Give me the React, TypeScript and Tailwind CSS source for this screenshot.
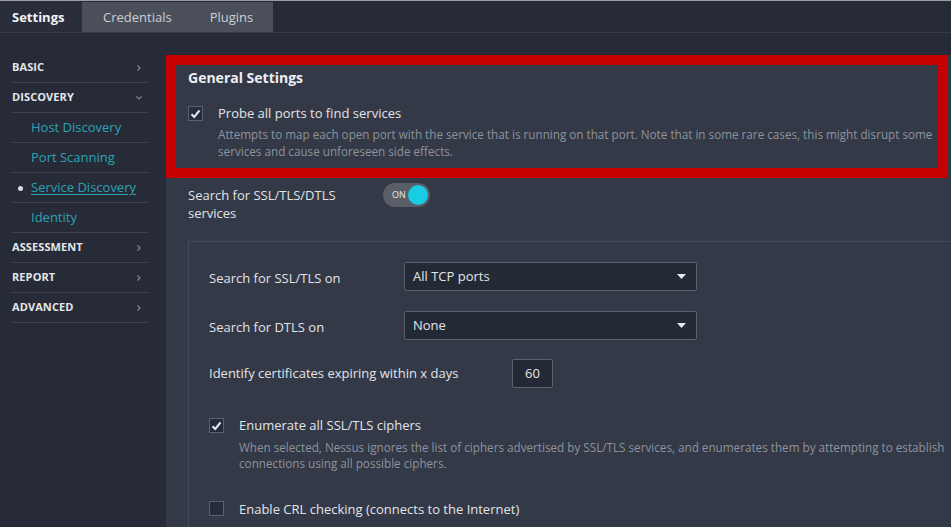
import React from "react";

const Chevron = ({ down = false }: { down?: boolean }) => (
  <svg width="8" height="8" viewBox="0 0 8 8" className="text-[#7d8390]">
    {down ? (
      <path d="M1.5 2.5 L4 5 L6.5 2.5" fill="none" stroke="currentColor" strokeWidth="1.2" />
    ) : (
      <path d="M2.5 1.5 L5 4 L2.5 6.5" fill="none" stroke="currentColor" strokeWidth="1.2" />
    )}
  </svg>
);

const Check = ({ checked }: { checked: boolean }) => (
  <div className="w-[15px] h-[15px] shrink-0 border border-[#5a6070] bg-[#262c3d] flex items-center justify-center">
    {checked && (
      <svg width="11" height="10" viewBox="0 0 11 10">
        <path d="M1.5 5.2 L4.2 8 L9.5 1.5" fill="none" stroke="#e6e8ee" strokeWidth="2" />
      </svg>
    )}
  </div>
);

const Caret = () => (
  <svg width="9" height="5" viewBox="0 0 9 5">
    <path d="M0 0 L9 0 L4.5 5 Z" fill="#e8e9ec" />
  </svg>
);

const SideHead = ({ label, down = false }: { label: string; down?: boolean }) => (
  <div className="h-[30px] flex items-center justify-between border-b border-[#3c424f] pr-[5px]">
    <span className="text-[11px] font-bold text-[#e4e6ea] tracking-[0.1px]">{label}</span>
    <Chevron down={down} />
  </div>
);

const SideSub = ({ label, active = false }: { label: string; active?: boolean }) => (
  <div className="h-[30px] flex items-center border-b border-[#3c424f] relative pt-[1px]">
    {active && <span className="absolute left-[6px] w-[5px] h-[5px] rounded-full bg-[#d8dade]" />}
    <span className={`pl-[19px] text-[13px] text-[#2aa4b4] ${active ? "underline underline-offset-2" : ""}`}>{label}</span>
  </div>
);

const Select = ({ value }: { value: string }) => (
  <div className="w-[293px] h-[29px] bg-[#242936] border border-[#5a606d] rounded-[2px] flex items-center justify-between pl-[8px] pr-[10px]">
    <span className="text-[13px] text-[#e4e6ea]">{value}</span>
    <Caret />
  </div>
);

export default function App() {
  return (
    <div
      className="w-[951px] h-[527px] overflow-hidden bg-[#262b37] flex flex-col"
      style={{ fontFamily: '"Open Sans", "Noto Sans", sans-serif' }}
    >
      {/* top tabs */}
      <div className="h-[33px] shrink-0 flex border-t border-[#9a9da3] border-b border-b-[#363b47] bg-[#262b37]">
        <div className="w-[82px] flex items-center pl-[12px] pt-[2px] text-[13px] font-bold text-[#f2f3f5] bg-[#292e3a]">Settings</div>
        <div className="w-[191px] mt-[1px] pt-[1px] flex items-center bg-[#4a4f59] text-[13px] text-[#cdd0d5]">
          <span className="pl-[21px]">Credentials</span>
          <span className="pl-[38px]">Plugins</span>
        </div>
      </div>

      <div className="flex flex-1 min-h-0">
        {/* sidebar */}
        <div className="w-[166px] shrink-0 pt-[20px] pl-[12px] pr-[18px]">
          <SideHead label="BASIC" />
          <SideHead label="DISCOVERY" down />
          <SideSub label="Host Discovery" />
          <SideSub label="Port Scanning" />
          <SideSub label="Service Discovery" active />
          <SideSub label="Identity" />
          <SideHead label="ASSESSMENT" />
          <SideHead label="REPORT" />
          <SideHead label="ADVANCED" />
        </div>

        {/* main */}
        <div className="flex-1 mt-[22px] bg-[#333947] overflow-hidden flex flex-col pr-[3px]">
          <div className="border-[10px] border-[#c50000] pl-[12px] pt-[3px] pb-[8px]">
            <div className="text-[14px] font-bold text-[#eef0f3] leading-[20px]">General Settings</div>
            <div className="flex mt-[15px]">
              <div className="pt-[3px]"><Check checked /></div>
              <div className="pl-[15px]">
                <div className="text-[13px] text-[#e2e4e8] leading-[20px]">Probe all ports to find services</div>
                <div className="text-[11.7px] text-[#8e939d] leading-[17px] mt-[3px] whitespace-nowrap">
                  Attempts to map each open port with the service that is running on that port. Note that in some rare cases, this might disrupt some
                  <br />
                  services and cause unforeseen side effects.
                </div>
              </div>
            </div>
          </div>

          <div className="pl-[22px]">
            <div className="flex mt-[5px]">
              <div className="w-[195px] text-[13px] text-[#e2e4e8] leading-[18px] pt-[3px]">
                Search for SSL/TLS/DTLS
                <br />
                services
              </div>
              <div className="w-[47px] h-[24px] rounded-full bg-[#5a5e67] flex items-center justify-between pl-[9px] pr-[2px]">
                <span className="text-[9px] text-[#e8e9ec]">ON</span>
                <span className="w-[20px] h-[20px] rounded-full bg-[#18cce3]" />
              </div>
            </div>

            <div className="mt-[19px] border-t border-l border-[#444a57] -mr-[20px] pl-[20px] pt-[20px] pb-[40px]">
              <div className="flex items-center h-[29px]">
                <span className="w-[195px] text-[13px] text-[#e2e4e8] pt-[5px]">Search for SSL/TLS on</span>
                <Select value="All TCP ports" />
              </div>
              <div className="flex items-center h-[29px] mt-[20px]">
                <span className="w-[195px] text-[13px] text-[#e2e4e8] pt-[5px]">Search for DTLS on</span>
                <Select value="None" />
              </div>
              <div className="flex items-center h-[29px] mt-[19px]">
                <span className="w-[303px] text-[13px] text-[#e2e4e8]">Identify certificates expiring within x days</span>
                <div className="w-[41px] h-[29px] bg-[#242936] border border-[#5a606d] rounded-[2px] flex items-center justify-center text-[13px] text-[#e4e6ea]">60</div>
              </div>

              <div className="flex mt-[29px]">
                <div className="pt-[1px]"><Check checked /></div>
                <div className="pl-[15px]">
                  <div className="text-[13px] text-[#e2e4e8] leading-[16px]">Enumerate all SSL/TLS ciphers</div>
                  <div className="text-[11.7px] text-[#8e939d] leading-[16px] mt-[6px] whitespace-nowrap">
                    When selected, Nessus ignores the list of ciphers advertised by SSL/TLS services, and enumerates them by attempting to establish
                    <br />
                    connections using all possible ciphers.
                  </div>
                </div>
              </div>

              <div className="flex mt-[29px] items-center">
                <Check checked={false} />
                <div className="pl-[15px] text-[13px] text-[#e2e4e8] leading-[16px] pt-[1px]">Enable CRL checking (connects to the Internet)</div>
              </div>
            </div>
          </div>
        </div>
      </div>
    </div>
  );
}
